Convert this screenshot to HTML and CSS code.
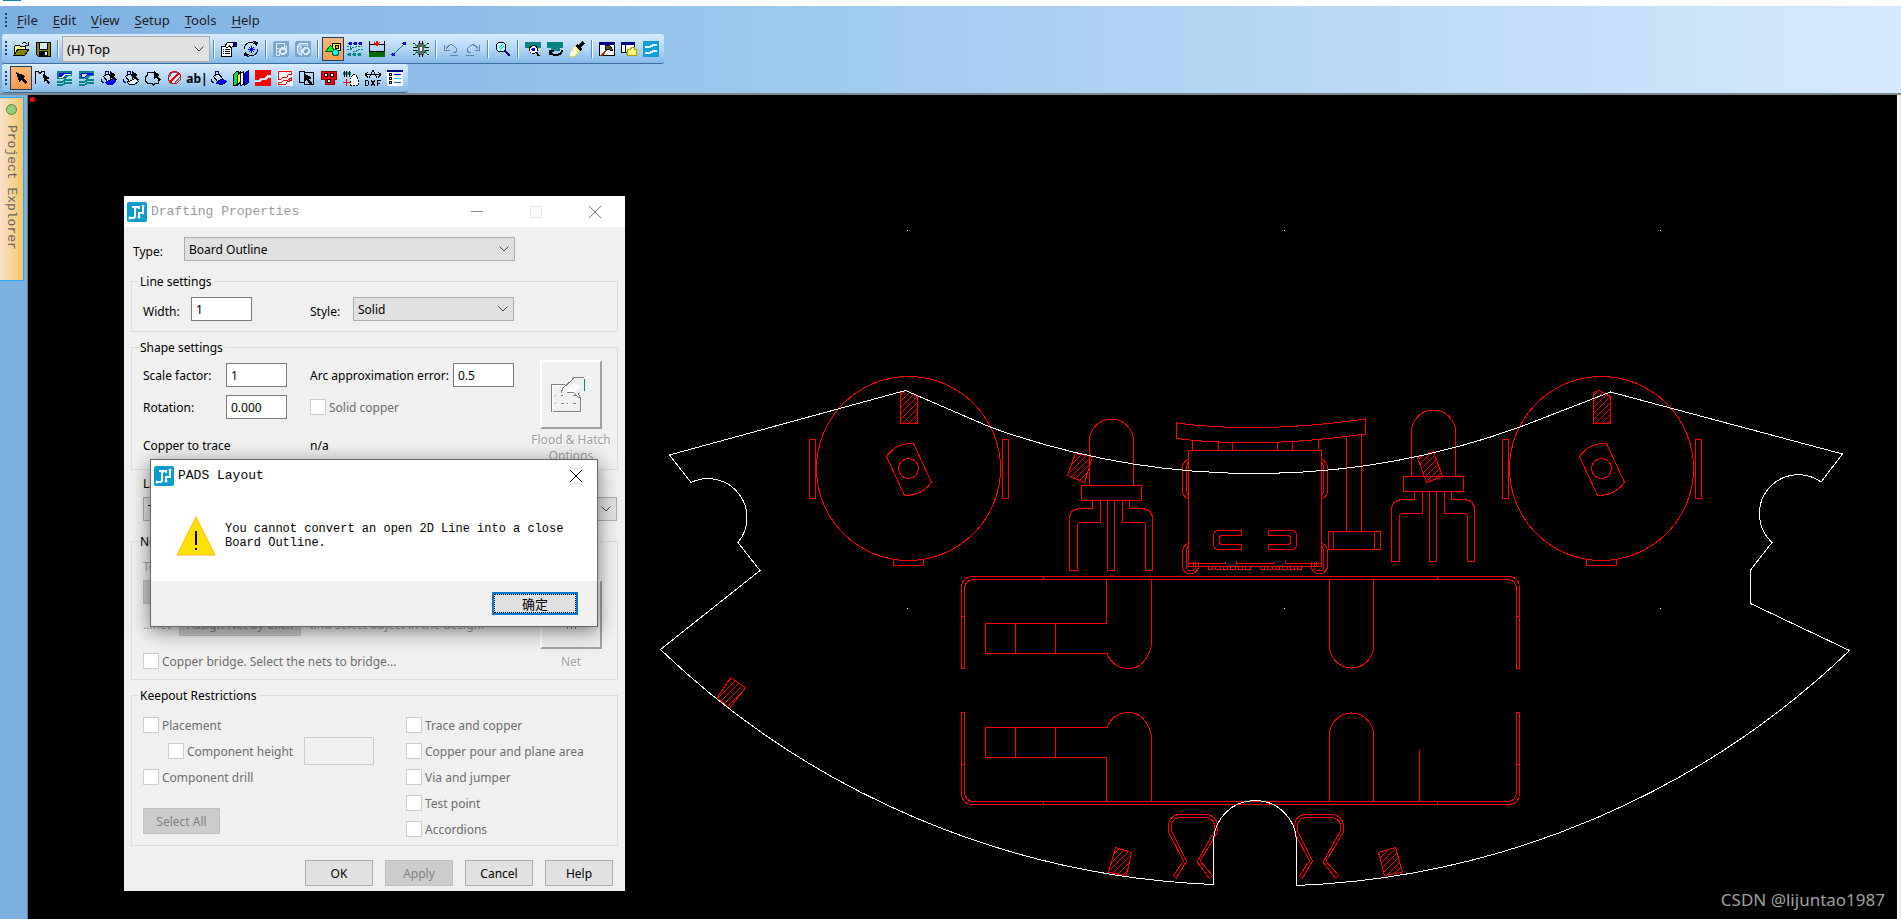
FILE: index.html
```html
<!DOCTYPE html>
<html lang="en">
<head>
    <meta charset="UTF-8">
    <title>PADS Layout</title>
    <link rel="stylesheet" href="styles.css">
</head>
<body>
    <div class="titlestrip"><span class="titlemark"></span></div>

    <header class="header">
        <nav class="menu">
            <span class="grip"></span>
            <a href="#"><u>F</u>ile</a>
            <a href="#"><u>E</u>dit</a>
            <a href="#"><u>V</u>iew</a>
            <a href="#"><u>S</u>etup</a>
            <a href="#"><u>T</u>ools</a>
            <a href="#"><u>H</u>elp</a>
        </nav>

        <div class="toolbar">
            <span class="grip"></span>
            <button class="tool" aria-label="Open"><svg viewBox="0 0 16 16"><path d="M1 14V5h1l1-1h3l1 1h5v3" fill="#ffff9c" stroke="#000"/><path d="M1 14l4-6h11l-4 6z" fill="#848400" stroke="#000"/><path d="M9 3q3-3 5 0M15 1v3h-3" fill="none" stroke="#000"/></svg></button>
            <button class="tool" aria-label="Save"><svg viewBox="0 0 16 16"><path d="M1 1h14v14H3l-2-2z" fill="#848400" stroke="#000"/><path d="M4 1h8v7H4z" fill="#d8ecff" stroke="#000"/><path d="M4 10h9v5H4z"/><path d="M10 11h2v3h-2z" fill="#fff"/></svg></button>
            <span class="sep"></span>
            <select class="layer" aria-label="Layer"><option>(H) Top</option></select>
            <span class="sep"></span>
            <button class="tool" aria-label="Properties"><svg viewBox="0 0 16 16"><path d="M.5 5.500h10v10H.5z" fill="#fff" stroke="#000"/><path d="M2 8.500h1m1 0h5M2 10.500h1m1 0h5M2 12.500h1m1 0h5" stroke="#000"/><path d="M3.500 5.500l3-4h6v4l-3 1-1-2-2 2z" fill="#fff" stroke="#000"/><path d="M12 1h4v5h-3z" fill="#000084"/></svg></button>
            <button class="tool" aria-label="Cycle"><svg viewBox="0 0 16 16"><path d="M1.500 8a6 6 0 0 1 10-5M14.500 8a6 6 0 0 1-10 5" fill="none" stroke="#000"/><path d="M10 0l5 1-1 5zM6 16l-5-1 1-5z"/><path d="M8.500 5v7M5 8.500h7M6 6l5 5M11 6l-5 5" stroke="#00f"/></svg></button>
            <span class="sep"></span>
            <button class="tool" aria-label="Verify design" disabled><svg viewBox="0 0 16 16"><rect width="16" height="16" rx="2" fill="#7ba6cd"/><path d="M3 2h8v3h2v3H6v6H3z" fill="none" stroke="#dbeafa"/><path d="M4 7h2M4 10h2" stroke="#dbeafa"/><circle cx="10" cy="10" r="3" fill="none" stroke="#dbeafa" stroke-width="2"/></svg></button>
            <button class="tool" aria-label="Design settings" disabled><svg viewBox="0 0 16 16"><rect width="16" height="16" rx="2" fill="#7ba6cd"/><path d="M2 5l4-3h6v3M2 5v6l4 3V6z" fill="#a5c6e5" stroke="#dbeafa"/><circle cx="11" cy="10" r="3" fill="none" stroke="#dbeafa" stroke-width="2"/></svg></button>
            <span class="sep"></span>
            <button class="tool on" aria-label="Drafting"><svg viewBox="0 0 16 16"><path d="M7.500 2.500h8v7h-8z" fill="#ff0" stroke="#000"/><path d="M10.500 4.500h3v3h-3z" fill="#f9a860" stroke="#000"/><path d="M.5 10.500l5-6 5 6z" fill="#0f0" stroke="#060"/><circle cx="10.500" cy="11.500" r="3" fill="#0ff" stroke="#066"/></svg></button>
            <button class="tool" aria-label="Design"><svg viewBox="0 0 16 16"><g fill="#00f"><circle cx="3.500" cy="2.500" r="2"/><circle cx="8.500" cy="2.500" r="2"/><circle cx="13.500" cy="2.500" r="2"/></g><path d="M0 8.500h3l2-2h3l2-1h5M6 10.500h3l2-2h5M0 5.500h3l2 3" fill="none" stroke="#008484" stroke-dasharray="2 1"/><g fill="#008484"><circle cx="2.500" cy="13.500" r="2"/><circle cx="7.500" cy="13.500" r="2"/><circle cx="12.500" cy="13.500" r="2"/></g></svg></button>
            <button class="tool" aria-label="Dimensioning"><svg viewBox="0 0 16 16"><path d="M0 10h16v6H0z" fill="#006b00"/><path d="M.5 0v10M15.500 0v10M0 3.500h6M10 3.500h6M0 10.500h16" fill="none" stroke="#000"/><path d="M5 1l3 4 3-4" fill="none" stroke="#f00"/><path d="M7 0h2v3H7z" fill="#f00"/></svg></button>
            <button class="tool" aria-label="ECO"><svg viewBox="0 0 16 16"><path d="M3 13L13 3" stroke="#008484"/><circle cx="2.500" cy="13.500" r="2" fill="#00f"/><circle cx="13.500" cy="2.500" r="2" fill="#00f"/></svg></button>
            <button class="tool" aria-label="BGA"><svg viewBox="0 0 16 16"><path d="M5 2h6v12H5z" fill="#636363"/><path d="M0 2l5 3M0 6.500h5M0 9.500h5M0 14l5-3M16 2l-5 3M16 6.500h-5M16 9.500h-5M16 14l-5-3M6.500 0v3M9.500 0v3M6.500 13v3M9.500 13v3" stroke="#000"/><path d="M2 3l3 4M14 3l-3 4M2 13l3-4M14 13l-3-4" stroke="#0a4"/><path d="M7 6h2v4H7z" fill="#fff"/></svg></button>
            <span class="sep"></span>
            <button class="tool" aria-label="Undo" disabled><svg viewBox="0 0 16 16"><path d="M3 8q5-8 10-1 2 4-3 5M1.500 4v5.500h5M7 14.500h8" fill="none" stroke="#6085a8"/></svg></button>
            <button class="tool" aria-label="Redo" disabled><svg viewBox="0 0 16 16"><path d="M13 8q-5-8-10-1-2 4 3 5M14.500 4v5.500h-5M1 14.500h8" fill="none" stroke="#6085a8"/></svg></button>
            <span class="sep"></span>
            <button class="tool" aria-label="Zoom"><svg viewBox="0 0 16 16"><circle cx="6" cy="6" r="5" fill="#bff" stroke="#000"/><path d="M4 7l4-4M5 9l4-4" stroke="#0cc"/><path d="M10 10l5 5" stroke="#000084" stroke-width="2"/></svg></button>
            <span class="sep"></span>
            <button class="tool" aria-label="Board view"><svg viewBox="0 0 16 16"><path d="M0 1h16v6h-3v3H4V7H0z" fill="#008484"/><circle cx="8.500" cy="8.500" r="4" fill="#fff" stroke="#000"/><circle cx="8.500" cy="8.500" r="2" fill="#00f"/><path d="M11 11l3 4" stroke="#000" stroke-width="2"/></svg></button>
            <button class="tool" aria-label="Rotate board"><svg viewBox="0 0 16 16"><path d="M0 1h16v6h-3v3H4V7H0z" fill="#008484"/><path d="M2.500 14V9.500H7M3 10q2 5 7 4t5-5" fill="none" stroke="#000" stroke-width="2"/></svg></button>
            <button class="tool" aria-label="Redraw"><svg viewBox="0 0 16 16"><path d="M13 0l3 3-4 3 1 2-2 2-5-5 2-2 2 1z"/><path d="M6 5l5 5-5 5-6 1 2-5z" fill="#ffc"/><path d="M6 5l5 5-5 5-6 0" fill="none" stroke="#dc0" stroke-dasharray="2 1"/></svg></button>
            <span class="sep"></span>
            <button class="tool" aria-label="Output window"><svg viewBox="0 0 16 16"><path d="M.5 1.500h15v13H.5z" fill="#fff" stroke="#000"/><path d="M0 1h16v3H0z" fill="#000084"/><path d="M2 15l8-9" stroke="#a03000" stroke-width="2"/><path d="M6 5l4-1 4 5-2 1-2-2-3 1z" fill="#552" stroke="#000"/></svg></button>
            <button class="tool" aria-label="Project window"><svg viewBox="0 0 16 16"><path d="M.5 1.500h13v10H.5z" fill="#fff" stroke="#000"/><path d="M0 1h14v3H0z" fill="#000084"/><path d="M4.500 4v8" stroke="#000"/><path d="M6.500 8.500h3l1-2h3v2h2v6h-9z" fill="#ffff7c" stroke="#a90"/></svg></button>
            <button class="tool" aria-label="Router"><svg viewBox="0 0 16 16"><rect width="16" height="16" fill="#0f9fd6"/><path d="M2 6h5l3-2h4M2 12h5l3-2h4" fill="none" stroke="#e8faff" stroke-width="2"/></svg></button>
        </div>

        <div class="toolbar">
            <span class="grip"></span>
            <button class="tool on" aria-label="Select"><svg viewBox="0 0 16 16"><path d="M3 2l9 4-2 2 4 4-2 2-4-4-2 2z"/></svg></button>
            <button class="tool" aria-label="2D line"><svg viewBox="0 0 16 16"><path d="M.5 14V1.500h3l1 2h1l1-2h3v3" fill="none" stroke="#000"/><path d="M8 4l7 4-3 1 3 4-2 1-2-4-2 2z"/></svg></button>
            <button class="tool" aria-label="Copper"><svg viewBox="0 0 16 16"><path d="M0 1h15v5h-4L8 9H0z" fill="#008484"/><path d="M2 3h12v2H9L6 7H2z" fill="#00f"/><path d="M2 7.500h3l3-3h6" stroke="#fff" fill="none"/><path d="M0 11.500h6l3-2h6M0 14.500h6l3-2h6" fill="none" stroke="#008484" stroke-width="2"/></svg></button>
            <button class="tool" aria-label="Copper cutout"><svg viewBox="0 0 16 16"><path d="M0 1h15v5h-4L8 9H0z" fill="#008484"/><path d="M2.500 3.500h11v1h-5l-3 3h-3z" fill="#cfe6fd" stroke="#00f"/><path d="M0 11.500h6l3-2h6M0 14.500h6l3-2h6" fill="none" stroke="#008484" stroke-width="2"/></svg></button>
            <button class="tool" aria-label="Copper pour"><svg viewBox="0 0 16 16"><path d="M4 13q2-4 8-4l3 3-4 3H6z" fill="#00f"/><path d="M2.500 6.500l5-3 4 5-5 3z" fill="#bde" stroke="#000"/><path d="M4.500 5V1.500h3V5M1 9q-1 3 2 4" fill="none" stroke="#000084"/><path d="M9 1l6 4-2 1 3 4-2 1-3-4-2 2z"/></svg></button>
            <button class="tool" aria-label="Plane area"><svg viewBox="0 0 16 16"><path d="M4.500 12.500q2-5 8-4l3 3-4 3h-5z" fill="#e8f4ff" stroke="#000"/><path d="M2.500 6.500l5-3 4 5-5 3z" fill="#bde" stroke="#000"/><path d="M4.500 5V1.500h3V5M1 9q-1 3 2 4" fill="none" stroke="#000084"/><path d="M9 1l6 4-2 1 3 4-2 1-3-4-2 2z"/></svg></button>
            <button class="tool" aria-label="Board outline"><svg viewBox="0 0 16 16"><path d="M10 2.500H2.500v3l-2 1v5l2 1v1h5l1 2 1-2h4V10" fill="none" stroke="#000"/><path d="M9 1l6 4-2 1 3 4-2 1-3-4-2 2z"/></svg></button>
            <button class="tool" aria-label="Keepout"><svg viewBox="0 0 16 16"><path d="M5 2h6l3 4-7 8-4-1-2-4z" fill="#d5eaff" stroke="#667"/><circle cx="7.500" cy="7.500" r="6" fill="none" stroke="#f00"/><path d="M3 12l9-9" stroke="#f00" stroke-width="2"/></svg></button>
            <button class="tool abl" aria-label="Text">ab|</button>
            <button class="tool" aria-label="Flood"><svg viewBox="0 0 16 16"><path d="M5 13q1-5 7-4l4 2-5 4z" fill="#00f"/><path d="M2.500 6.500l5-3 4 5-5 3z" fill="#bde" stroke="#000"/><path d="M4.500 5V1.500h3V5M1 9q-1 3 2 4M5 13l6 2 5-4" fill="none" stroke="#000084"/></svg></button>
            <button class="tool" aria-label="Library"><svg viewBox="0 0 16 16"><path d="M.5 4.500l3-3h2v10l-2 4h-3z" fill="#0d4" stroke="#000"/><path d="M4.500 5.500l3-4v10l-3 4z" fill="#ff0" stroke="#000"/><path d="M7.500 3.500l3-2v13l-3 1z" fill="#fff" stroke="#000"/><path d="M11.500 3.500l4-3v12l-4 3z" fill="#00f" stroke="#000084"/></svg></button>
            <button class="tool" aria-label="Hatch"><svg viewBox="0 0 16 16"><path d="M0 0h16v5h-4L9 8H5l-2 2H0zM16 8v8H0v-4h5l2-2h4l2-2z" fill="#f00"/><path d="M0 11h4l2-2h4l3-3h3" fill="none" stroke="#fff"/></svg></button>
            <button class="tool" aria-label="Hatch cutout"><svg viewBox="0 0 16 16"><path d="M0 0h16v16H0z" fill="#eef4fa"/><path d="M14.500 1.500h-13v8h2l2-2h4l2-3h3zM1.500 14.500v-2h3l2-2h4l4-3v3l-4 1-2 3z" fill="#fff" stroke="#f00"/></svg></button>
            <button class="tool" aria-label="Drill"><svg viewBox="0 0 16 16"><path d="M6 1.500H.5v11h5v2h9v-12h-9V12" fill="none" stroke="#000"/><path d="M5 3l8 5-3 1 3 4-2 2-3-5-3 2z"/></svg></button>
            <button class="tool" aria-label="Reuse"><svg viewBox="0 0 16 16"><path d="M.5 1.500h15v8h-2v5h-9v-5h-4z" fill="#f00" stroke="#800000"/><g fill="#fff" stroke="#000"><circle cx="5" cy="5" r="2"/><circle cx="11" cy="5" r="2"/><circle cx="8" cy="11" r="2"/></g></svg></button>
            <button class="tool" aria-label="Import"><svg viewBox="0 0 16 16"><path d="M0 2h8v3H0z" fill="#088"/><path d="M1.500 1v6M3.500 1v6M6.500 1v6" stroke="#000"/><path d="M7.500 15.500v-6l2-5h3l3 5v6z" fill="#fff" stroke="#000" stroke-dasharray="2 1"/><path d="M0 12.500h7M3.500 9v7" stroke="#f00"/></svg></button>
            <button class="tool" aria-label="DXF"><svg viewBox="0 0 16 16"><path d="M0 4.500h16M3 2L0 4.500l3 3M13 2l3 2.500-3 3M8 0L4 8M8 0l4 8" fill="none" stroke="#000"/><path d="M.5 10.500v5h2l1-1v-3l-1-1zM6 10l4 6M10 10l-4 6M12.500 16v-5.500H16M12 13.500h3" fill="none" stroke="#000"/></svg></button>
            <button class="tool" aria-label="List"><svg viewBox="0 0 16 16"><path d="M0 1h16v15H0z" fill="#fff"/><path d="M0 0h16v2H0z" fill="#000084"/><path d="M2.500 3.500h2v2h-2zM2.500 7.500h2v2h-2zM2.500 11.500h2v2h-2z" fill="none" stroke="#000"/><path d="M7 4.500h7" stroke="#00f"/><path d="M7 8.500h7" stroke="#0cf"/><path d="M7 12.500h7" stroke="#008484"/></svg></button>
        </div>
    </header>

    <main class="main">
        <aside class="side">
            <button class="explorer"><span class="dot"></span>Project Explorer</button>
        </aside>

        <section class="canvas">
            <svg class="board" viewBox="28 95 1869 824" preserveAspectRatio="xMinYMin meet">
                <defs>
                    <pattern id="hatch" width="6" height="6" patternUnits="userSpaceOnUse">
                        <path d="M-1 7L7 -1" stroke="#f00"/>
                    </pattern>
                </defs>

                <g class="red">
                    <!-- round switch -->
                    <g id="switch">
                        <circle cx="908.5" cy="468.5" r="92"/>
                        <circle cx="908.5" cy="468.5" r="10"/>
                        <path d="M809.5 439.5h6v59h-6zM1002.5 439.5h6v59h-6zM893.5 560v5.5h30V560"/>
                        <path d="M913.5 443.5L931.500 482.5Q921 496 904.500 495.500L886.500 456.500Q896 443 913.500 443.500z"/>
                        <path class="hatch" d="M900.5 392.500L906 390.500L917.500 396.500V423.500H900.500z"/>
                    </g>
                    <use href="#switch" x="693"/>

                    <!-- led -->
                    <g id="led">
                        <path d="M1089.500 485.500V441a22 22 0 0 1 44 0V485.500"/>
                        <path d="M1081.500 485.500h60v15h-60z"/>
                        <path d="M1107.500 500.500v70h7v-70"/>
                        <path d="M1092.500 500.500v8H1080.500Q1069.500 509 1069.500 519V570.500h8V526q0-3.500 4-3.500H1100.500v-22"/>
                        <path d="M1129.500 500.500v8H1141.500Q1152.500 509 1152.500 519V570.500h-7V526q0-3.500-4-3.500H1122.500v-22"/>
                    </g>
                    <use href="#led" x="322" y="-9"/>

                    <!-- connector -->
                    <path d="M1176.500 423Q1260 434 1365.500 419V434Q1260 449 1176.500 438.500z"/>
                    <path d="M1192.500 440v10M1218.500 441v9M1232.500 442v8M1277.500 442v8M1292.500 441v9M1318.500 439v11"/>
                    <path d="M1346.500 436v95M1361.500 434v97M1328.500 531.500h52v18h-52zM1333.500 531v18M1374.500 531v18"/>
                    <path d="M1188.500 450.500h133v116h-133zM1188 563.500h37v-2M1236.500 561v2.500h37v-2M1285.500 561v2.500h36"/>
                    <path d="M1208.500 566v3.500h4V566M1215.500 566v3.500h5V566M1223.500 566v3.500h4V566M1230.500 566v3.500h5V566M1238.500 566v3.500h4V566M1245.500 566v3.500h5V566M1260.500 566v3.500h4V566M1267.500 566v3.500h5V566M1275.500 566v3.500h4V566M1282.500 566v3.500h5V566M1290.500 566v3.500h4V566M1297.500 566v3.500h4V566"/>
                    <g id="clips">
                        <path d="M1188 459.500Q1182.500 462 1182.500 468V491Q1182.500 496 1188 498.500M1188 462.500l-1.500 4v26l1.500 2"/>
                        <path d="M1188 543.500Q1182.500 546 1182.500 552V566a8 8 0 0 0 16 0v-4M1188 546.500l-1.500 4v16a4 4 0 0 0 9 0v-5M1193.500 562v4h5"/>
                        <path d="M1241.500 530.500H1218q-4.500 0-4.500 5v9q0 5 4.500 5h23.500v-5H1222q-2.500 0-2.500-3v-3q0-3 2.500-3h19.500z"/>
                    </g>
                    <use href="#clips" transform="matrix(-1 0 0 1 2510 0)"/>

                    <!-- hatched pads -->
                    <path class="hatch" d="M1075.500 453.500L1092.500 456.500L1084.500 482.500L1067.500 475.500z"/>
                    <path class="hatch" d="M1417.500 457.500L1433.500 451.500L1442.500 476.500L1426.500 482.500z"/>
                    <path class="hatch" d="M730.500 677.500L745.500 687.500L729.500 708.500L717.500 697.500z"/>
                    <path class="hatch" d="M1115.500 847.500L1131.500 852.500L1126.500 875.500L1108.500 872.500z"/>
                    <path class="hatch" d="M1395.500 847.500L1378.500 852.500L1384.500 875.500L1402.500 872.500z"/>

                    <!-- battery frame, lower half is mirrored -->
                    <g id="frame">
                        <path d="M961.500 668.500V587Q962 577 972 576.500H1509Q1519 577 1519.500 587V668.500h-3V589Q1516 580 1508 579.500H973Q965 580 964.500 589V668.500z"/>
                        <path d="M961 616.500h3M1516 616.500h3M1043.500 576v3M1437.500 576v3"/>
                        <path d="M1106.500 579v44.500H985.500v30H1107Q1113 668.500 1129 668.500T1151.500 646V579M1015.500 623v30M1055.500 623v30"/>
                        <path d="M1329.500 579v67a22 22 0 0 0 44 0v-67"/>
                    </g>
                    <use href="#frame" transform="matrix(1 0 0 -1 0 1381)"/>
                    <path d="M1419.500 750v51"/>

                    <!-- spring contacts -->
                    <g id="spring">
                        <path d="M1173.500 875.500L1183.500 861L1169 833Q1166 815 1180 814.500H1205Q1220 815 1217 833L1200 861L1212.500 875.500L1209.500 878.500L1197 862L1214 832Q1217 818 1204 817.500H1181Q1169 818 1172 832L1186.500 861L1176.500 878z"/>
                    </g>
                    <use href="#spring" x="126"/>
                </g>

                <path class="white" d="M669.500 455L905.500 390.500L990 427A778 778 0 0 0 1520 427L1610.500 392L1842.500 454L1821 482A39 39 0 0 0 1772 542.500L1750.500 570V603.500L1849.500 650.500A846 846 0 0 1 1296.500 885.500V842A41 41 0 0 0 1213.500 842V884.500A846 846 0 0 1 660.500 649.500L760 570.500L738 542.500A39 39 0 0 0 691 482.500z"/>
                <path class="grid" d="M907 230h1v1h-1zM1284 230h1v1h-1zM1660 230h1v1h-1zM907 608h1v1h-1zM1284 608h1v1h-1zM1660 608h1v1h-1z"/>
                <circle cx="32.500" cy="99.500" r="2.500" fill="#f00"/>
            </svg>

            <form class="window drafting">
                <div class="caption">
                    <svg class="logo" viewBox="0 0 20 20"><rect width="20" height="20" rx="2" fill="#0e9bd0"/><path d="M3 16h3q2 0 2-2V8q0-3 2-3M5 5h6M12 15v-4h4V4M12 4v3" fill="none" stroke="#fff" stroke-width="2"/><circle cx="3" cy="16" r="1.500" fill="#fff"/><circle cx="12" cy="15" r="1.500" fill="#fff"/><circle cx="16" cy="4" r="1.500" fill="#fff"/></svg>
                    <span class="name">Drafting Properties</span>
                    <svg class="sys" viewBox="0 0 12 12"><path d="M0 5.500h12" stroke="#8a8a8a"/></svg>
                    <svg class="sys" viewBox="0 0 12 12"><path d="M.5.5h11v11H.5z" fill="none" stroke="#e4e4e4"/></svg>
                    <svg class="sys" viewBox="0 0 12 12"><path d="M0 0l12 12M12 0L0 12" stroke="#777"/></svg>
                </div>
                <div class="content">
                    <div class="type">
                        <label for="type">Type:</label>
                        <select id="type"><option>Board Outline</option></select>
                    </div>

                    <fieldset class="line">
                        <legend>Line settings</legend>
                        <label for="width">Width:</label>
                        <input type="text" id="width" value="1">
                        <label for="style">Style:</label>
                        <select id="style"><option>Solid</option></select>
                    </fieldset>

                    <fieldset class="shape">
                        <legend>Shape settings</legend>
                        <div class="fields">
                            <label for="scale">Scale factor:</label>
                            <input type="text" id="scale" value="1">
                            <label for="arc">Arc approximation error:</label>
                            <input type="text" id="arc" value="0.5">
                            <label for="rotation">Rotation:</label>
                            <input type="text" id="rotation" value="0.000">
                            <label class="check"><input type="checkbox" disabled>Solid copper</label>
                            <span class="trace">Copper to trace</span>
                            <span>n/a</span>
                        </div>
                        <div class="bigtool">
                            <button type="button" class="big" id="flood" aria-label="Flood and hatch options" disabled><svg viewBox="0 0 40 36"><path d="M.5 35V7.500H14M29.500 20v14.500H1" fill="none" stroke="#808080"/><path d="M4 18.500h24M4 26.500h24" stroke="#808080" stroke-dasharray="1 5 3 3"/><path d="M1.500 35V8.500H14M30.500 20v15.500H1M3 27.500h24" fill="none" stroke="#fff"/><path d="M9 18l11-15M12 20L24 6M17 19l9-11M21 17l7-8" stroke="#fff" stroke-width="2"/><path d="M10 16l2-5 8-7 3-3.500h10M16 15l6 0 5 5 2 0-2-4" fill="none" stroke="#808080"/><path d="M33.500 2v12" stroke="#008484"/><path d="M34.500.5h5v13h-5" fill="none" stroke="#fff"/></svg></button>
                            <label for="flood">Flood &amp; Hatch<br>Options</label>
                        </div>
                    </fieldset>

                    <div class="layers">
                        <label for="layer">Layer:</label>
                        <select id="layer"><option>Top</option></select>
                    </div>

                    <fieldset class="net">
                        <legend>Net assignment</legend>
                        <div class="assign">
                            <span class="off">To assign</span>
                            <button type="button" class="netname" disabled>None</button>
                            <div class="click">
                                <span class="off">...net</span>
                                <button type="button" disabled>Assign Net by Click</button>
                                <span class="off">and select object in the design.</span>
                            </div>
                            <label class="check"><input type="checkbox" disabled>Copper bridge. Select the nets to bridge...</label>
                        </div>
                        <div class="bigtool">
                            <button type="button" class="big" id="net" aria-label="Net" disabled><svg viewBox="0 0 40 36"><path d="M16.500 0v32M20.500 0v32M24.500 0v32" stroke="#808080"/></svg></button>
                            <label for="net">Net</label>
                        </div>
                    </fieldset>

                    <fieldset class="keepout">
                        <legend>Keepout Restrictions</legend>
                        <div class="rules">
                            <label class="check"><input type="checkbox" disabled>Placement</label>
                            <div class="height">
                                <label class="check"><input type="checkbox" disabled>Component height</label>
                                <input type="text" aria-label="Component height value" disabled>
                            </div>
                            <label class="check"><input type="checkbox" disabled>Component drill</label>
                            <button type="button" class="all" disabled>Select All</button>
                        </div>
                        <div class="rules">
                            <label class="check"><input type="checkbox" disabled>Trace and copper</label>
                            <label class="check"><input type="checkbox" disabled>Copper pour and plane area</label>
                            <label class="check"><input type="checkbox" disabled>Via and jumper</label>
                            <label class="check"><input type="checkbox" disabled>Test point</label>
                            <label class="check"><input type="checkbox" disabled>Accordions</label>
                        </div>
                    </fieldset>

                    <div class="actions">
                        <button type="button">OK</button>
                        <button type="button" disabled>Apply</button>
                        <button type="button">Cancel</button>
                        <button type="button">Help</button>
                    </div>
                </div>
            </form>

            <div class="window message" role="alertdialog">
                <div class="caption">
                    <svg class="logo" viewBox="0 0 20 20"><rect width="20" height="20" rx="2" fill="#0e9bd0"/><path d="M3 16h3q2 0 2-2V8q0-3 2-3M5 5h6M12 15v-4h4V4M12 4v3" fill="none" stroke="#fff" stroke-width="2"/><circle cx="3" cy="16" r="1.500" fill="#fff"/><circle cx="12" cy="15" r="1.500" fill="#fff"/><circle cx="16" cy="4" r="1.500" fill="#fff"/></svg>
                    <span class="name">PADS Layout</span>
                    <svg class="sys" viewBox="0 0 12 12"><path d="M0 0l12 12M12 0L0 12" stroke="#000"/></svg>
                </div>
                <div class="text">
                    <svg class="warn" viewBox="0 0 40 40"><path d="M20 1L39 39H1z" fill="#fee100" stroke="#fdb813"/><path d="M20 15v14M20 32v2" stroke="#000" stroke-width="2"/></svg>
                    <p>You cannot convert an open 2D Line into a close<br>Board Outline.</p>
                </div>
                <div class="foot"><button lang="zh">确定</button></div>
            </div>

            <span class="watermark">CSDN @lijuntao1987</span>
        </section>
        <div class="edge"></div>
    </main>
</body>
</html>
```
FILE: styles.css
```css
* {
    box-sizing: border-box;
}
body {
    margin: 0;
    height: 100vh;
    display: flex;
    flex-direction: column;
    overflow: hidden;
    background: #fff;
    font-family: "Noto Sans", sans-serif;
    font-size: 12px;
    color: #000;
}
svg {
    display: block;
}
button, input, select {
    font: inherit;
    color: inherit;
    margin: 0;
    border-radius: 0;
}

/* header */
.titlestrip {
    height: 6px;
    padding-left: 3px;
}
.titlemark {
    display: block;
    width: 18px;
    height: 1px;
    background: #1583b0;
}
.header {
    background: linear-gradient(90deg, #7db1e0, #97c5eb 36%, #d6eaff);
    border-bottom: 2px solid #808890;
    padding-left: 2px;
}
.menu {
    display: flex;
    align-items: center;
    height: 28px;
    font-size: 13px;
}
.menu a {
    color: #1c1c1c;
    text-decoration: none;
    margin-right: 15px;
}
.menu a:first-of-type {
    margin-left: 3px;
}
.menu u {
    text-underline-offset: 2px;
}
.grip {
    width: 3px;
    height: 15px;
    margin: 0 6px 0 3px;
    background: repeating-linear-gradient(#1f3f66 0 2px, transparent 2px 4px);
    clip-path: inset(0 1px 0 0);
}
.toolbar {
    display: flex;
    align-items: center;
    width: max-content;
    height: 30px;
    padding-right: 2px;
    background: linear-gradient(#d8ebff, #b4d6f7 50%, #84bae8);
    border-bottom: 1px solid #3f6d9b;
    border-radius: 3px;
}
.toolbar + .toolbar {
    height: 29px;
}
.toolbar .grip {
    margin-right: 2px;
}
.tool {
    width: 22px;
    height: 24px;
    padding: 0;
    border: 0;
    background: none;
    display: flex;
    align-items: center;
    justify-content: center;
}
.tool svg {
    width: 16px;
    height: 16px;
    shape-rendering: crispEdges;
}
.tool.on {
    background: linear-gradient(#fdb878, #f99b4c);
    border: 1px solid #1f3f66;
}
.abl {
    font-weight: bold;
}
.sep {
    width: 2px;
    height: 18px;
    margin: 0 3px;
    background: #5c8ab8;
    border-right: 1px solid #fff;
}
select {
    appearance: none;
    border: 1px solid #adadad;
    height: 24px;
    padding: 0 4px;
    background: #e1e1e1 url("data:image/svg+xml,%3Csvg xmlns='http://www.w3.org/2000/svg' width='10' height='6'%3E%3Cpath d='M.5.5l4.500 4.500l4.500-4.500' fill='none' stroke='%23444'/%3E%3C/svg%3E") no-repeat right 5px center;
}
.layer {
    width: 148px;
    height: 26px;
    font-size: 13px;
}

/* workspace */
.main {
    flex: 1;
    display: flex;
    min-height: 0;
}
.side {
    width: 28px;
    padding-top: 2px;
    background: #7db1e0;
    border-right: 1px solid #777;
}
.explorer {
    display: flex;
    align-items: center;
    gap: 10px;
    width: 24px;
    height: 184px;
    padding: 6px 0;
    writing-mode: vertical-rl;
    border: 1px solid #2fa8f5;
    border-left: 0;
    background: linear-gradient(90deg, #fae3cd, #fac765);
    font-family: "Liberation Mono", monospace;
    font-size: 13px;
    color: #666;
}
.dot {
    width: 11px;
    height: 11px;
    border: 1px solid #4f8a3c;
    border-radius: 50%;
    background: #97cf7c;
}
.canvas {
    position: relative;
    flex: 1;
    background: #000;
}
.board {
    width: 100%;
    shape-rendering: crispEdges;
}
.red, .white {
    fill: none;
    stroke: #f00;
}
.white {
    stroke: #fff;
}
.grid {
    fill: #fff;
}
.hatch {
    fill: url(#hatch);
}
.edge {
    width: 4px;
    background: #f0f0f0;
    border-left: 1px solid #fff;
}
.watermark {
    position: absolute;
    right: 12px;
    bottom: 8px;
    font-size: 17px;
    color: #a0a0a0;
}

/* windows */
.window {
    position: absolute;
    background: #f0f0f0;
}
.caption {
    display: flex;
    align-items: center;
    background: #fff;
    height: 31px;
    padding-left: 3px;
    font-family: "Liberation Mono", monospace;
    font-size: 13px;
}
.logo {
    width: 20px;
    height: 20px;
}
.name {
    flex: 1;
    margin-left: 4px;
}
.sys {
    width: 12px;
    height: 12px;
    margin-left: 47px;
}
.drafting {
    left: 96px;
    top: 101px;
    width: 501px;
}
.drafting .caption {
    color: #999;
    padding-right: 24px;
}
.content {
    padding: 10px 7px 5px;
}
label, legend, .content span {
    white-space: nowrap;
}
fieldset {
    margin: 0;
    min-width: 0;
    border: 1px solid #dcdcdc;
    padding: 0 11px;
}
legend {
    height: 16px;
    line-height: 18px;
    padding: 0 2px;
    margin-left: -5px;
}
input[type="text"] {
    width: 61px;
    height: 24px;
    padding: 0 4px;
    border: 1px solid #7a7a7a;
    background: #fff;
}
input[type="text"]:disabled {
    border-color: #ccc;
    background: #f0f0f0;
}
input[type="checkbox"] {
    appearance: none;
    width: 16px;
    height: 16px;
    margin-right: 3px;
    border: 1px solid #ccc;
    background: #fff;
}
.check {
    display: flex;
    align-items: center;
    height: 16px;
    color: #6d6d6d;
}
.content button {
    padding: 0;
    border: 1px solid #adadad;
    background: #e1e1e1;
}
.content button:disabled {
    border-color: #bfbfbf;
    background: #ccc;
    color: #838383;
}
.off {
    color: #a0a0a0;
}
.type {
    display: grid;
    grid-template-columns: 51px 331px;
    align-items: center;
    padding-left: 2px;
    margin-bottom: 12px;
}
.type label, .line label {
    padding-top: 4px;
}
.line {
    display: grid;
    grid-template-columns: 48px 119px 43px 161px;
    align-items: center;
    padding-top: 8px;
    padding-bottom: 10px;
    margin-bottom: 7px;
}
.shape {
    display: flex;
    justify-content: space-between;
    height: 131px;
    padding-top: 8px;
    padding-right: 4px;
}
.fields {
    display: grid;
    grid-template-columns: 83px 84px 143px 61px;
    grid-template-rows: 24px 24px 36px;
    row-gap: 8px;
    align-items: center;
}
.trace {
    grid-column: 1 / 3;
    grid-row: 3;
}
.fields .check {
    grid-column: 3 / 5;
}
.content .big:disabled {
    width: 62px;
    height: 69px;
    display: flex;
    align-items: center;
    justify-content: center;
    border: 2px solid;
    border-color: #fff #a0a0a0 #a0a0a0 #fff;
    background: #f0f0f0;
}
.big svg {
    width: 40px;
    height: 36px;
    shape-rendering: crispEdges;
}
.bigtool {
    display: flex;
    flex-direction: column;
    align-items: center;
    gap: 3px;
    width: 84px;
    margin-top: -3px;
    line-height: 16px;
    text-align: center;
    color: #a0a0a0;
    text-shadow: 1px 1px #fff;
}
.layers {
    display: flex;
    flex-direction: column;
    gap: 5px;
    padding: 5px 1px 12px 12px;
}
.net {
    display: flex;
    justify-content: space-between;
    height: 147px;
    padding-top: 9px;
    padding-right: 4px;
    margin-bottom: 7px;
}
.net .bigtool {
    margin-top: 22px;
    gap: 5px;
}
.netname {
    display: block;
    width: 300px;
    height: 24px;
    margin: 5px 0 8px;
}
.click {
    display: grid;
    grid-template-columns: 36px 122px 1fr;
    align-items: center;
    margin-bottom: 17px;
}
.click button {
    height: 24px;
}
.click button + span {
    padding-left: 9px;
}
.keepout {
    display: grid;
    grid-template-columns: 263px 1fr;
    height: 159px;
    padding-top: 14px;
}
.rules {
    display: flex;
    flex-direction: column;
    align-items: flex-start;
    gap: 10px;
}
.height {
    display: flex;
    align-items: center;
    justify-content: space-between;
    width: 231px;
    height: 16px;
    padding-left: 25px;
}
.height input[type="text"] {
    width: 70px;
    height: 28px;
}
.all {
    width: 77px;
    height: 26px;
    margin-top: 13px;
}
.actions {
    display: flex;
    justify-content: flex-end;
    gap: 12px;
    padding: 14px 5px 0 0;
}
.actions button {
    width: 68px;
    height: 26px;
}

.message {
    left: 122px;
    top: 364px;
    width: 448px;
    border: 1px solid #666;
    background: #fff;
    box-shadow: 0 4px 18px rgba(0, 0, 0, 0.5);
}
.message .caption {
    padding-right: 15px;
}
.text {
    display: flex;
    align-items: center;
    gap: 9px;
    height: 90px;
    padding: 0 0 4px 25px;
    font-family: "Liberation Mono", monospace;
    line-height: 14px;
}
.text p {
    margin: 0;
    padding-top: 4px;
    white-space: nowrap;
}
.warn {
    width: 40px;
    height: 40px;
    margin-top: 4px;
}
.foot {
    display: flex;
    justify-content: flex-end;
    align-items: center;
    height: 45px;
    padding-right: 19px;
    background: #f0f0f0;
}
.foot button {
    width: 86px;
    height: 23px;
    padding: 0;
    border: 2px solid #0078d7;
    outline: 1px dotted #000;
    outline-offset: -3px;
    background: #e1e1e1;
    font-family: "Noto Sans CJK SC", sans-serif;
    font-size: 13px;
    line-height: 16px;
}
```
